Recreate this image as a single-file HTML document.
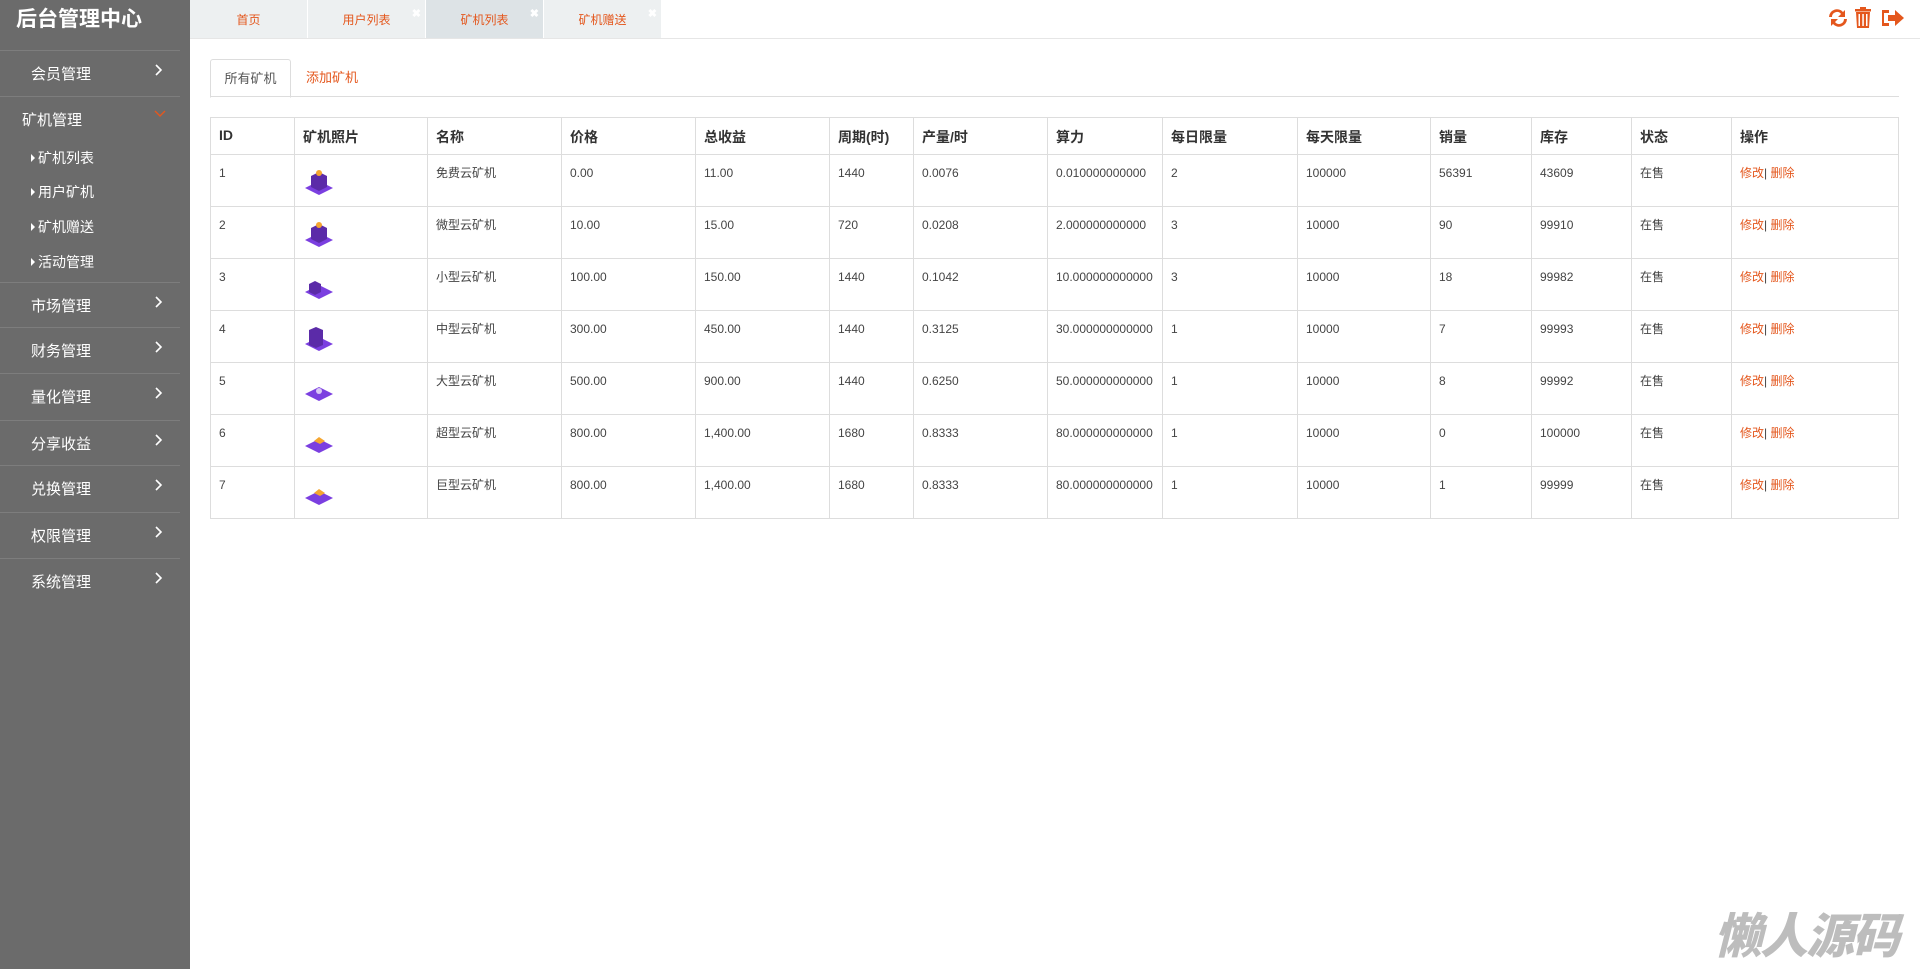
<!DOCTYPE html>
<html><head><meta charset="utf-8"><style>
*{margin:0;padding:0;box-sizing:border-box}
body{width:1920px;height:969px;overflow:hidden;background:#fff;font-family:"Liberation Sans","Noto Sans CJK SC",sans-serif;position:relative}
#side{position:absolute;left:0;top:0;width:190px;height:969px;background:#6b6b6b;color:#fff}
#side .title{height:50px;line-height:40px;font-size:21px;font-weight:bold;padding-left:16px}
.m{position:absolute;left:0;width:180px;border-top:1px solid #7d7d7d;font-size:15px;color:#fff}
.m span{position:absolute;left:31px;top:12px}
.m svg{position:absolute;left:154px;top:12px}
.s{position:absolute;left:31px;font-size:14px}
.s:before{content:"";display:inline-block;border-left:4px solid #fff;border-top:4px solid transparent;border-bottom:4px solid transparent;margin-right:3px;vertical-align:1px}
#tabs{position:absolute;left:190px;top:0;right:0;height:39px;border-bottom:1px solid #e6e6e6}
.t{position:absolute;top:0;height:38px;width:117px;background:#edf0f1;color:#e4571d;font-size:12px;line-height:40px;text-align:center}
.t b{position:absolute;right:4px;top:-6px;color:#fff;font-size:11px}
#ic{position:absolute;right:12px;top:6px}
#it{position:absolute;left:210px;top:59px;width:1689px;height:38px;border-bottom:1px solid #ddd}
#it div{position:absolute;top:0;height:38px;line-height:38px;font-size:13px}
table{position:absolute;left:210px;top:117px;width:1689px;border-collapse:collapse;border:1px solid #ddd;table-layout:fixed}
td,th{border:1px solid #ddd;text-align:left;vertical-align:top;color:#333;overflow:hidden;white-space:nowrap}
tr.h{height:37px}
tr.r{height:52px}
th{font-size:14px;padding:9px 8px 0}
td{font-size:12px;padding:11px 8px 0;color:#444;line-height:14px}
td svg{display:block;margin-top:2px}
td a{color:#e4571d}
#wm{position:absolute;left:1714px;top:897px;font-size:48px;font-weight:900;font-style:italic;color:#bdbdbd;letter-spacing:-2px;font-family:"Noto Sans CJK SC",sans-serif}
</style></head><body>
<div id="side">
<div class="title">后台管理中心</div>
<div class="m" style="top:50px;height:46px"><span>会员管理</span><svg width="10" height="14"><path d="M2 2l5 5-5 5" stroke="#fff" stroke-width="1.6" fill="none"/></svg></div>
<div class="m" style="top:96px;height:186px"><span style="left:22px">矿机管理</span><svg width="12" height="10" style="top:12px"><path d="M1 2l5 5 5-5" stroke="#e4571d" stroke-width="1.4" fill="none"/></svg></div>
<div class="s" style="top:148px">矿机列表</div>
<div class="s" style="top:182px">用户矿机</div>
<div class="s" style="top:217px">矿机赠送</div>
<div class="s" style="top:252px">活动管理</div>
<div class="m" style="top:282px;height:46px"><span>市场管理</span><svg width="10" height="14"><path d="M2 2l5 5-5 5" stroke="#fff" stroke-width="1.6" fill="none"/></svg></div>
<div class="m" style="top:327px;height:46px"><span>财务管理</span><svg width="10" height="14"><path d="M2 2l5 5-5 5" stroke="#fff" stroke-width="1.6" fill="none"/></svg></div>
<div class="m" style="top:373px;height:46px"><span>量化管理</span><svg width="10" height="14"><path d="M2 2l5 5-5 5" stroke="#fff" stroke-width="1.6" fill="none"/></svg></div>
<div class="m" style="top:420px;height:46px"><span>分享收益</span><svg width="10" height="14"><path d="M2 2l5 5-5 5" stroke="#fff" stroke-width="1.6" fill="none"/></svg></div>
<div class="m" style="top:465px;height:46px"><span>兑换管理</span><svg width="10" height="14"><path d="M2 2l5 5-5 5" stroke="#fff" stroke-width="1.6" fill="none"/></svg></div>
<div class="m" style="top:512px;height:46px"><span>权限管理</span><svg width="10" height="14"><path d="M2 2l5 5-5 5" stroke="#fff" stroke-width="1.6" fill="none"/></svg></div>
<div class="m" style="top:558px;height:46px"><span>系统管理</span><svg width="10" height="14"><path d="M2 2l5 5-5 5" stroke="#fff" stroke-width="1.6" fill="none"/></svg></div>
</div>
<div id="tabs">
<div class="t" style="left:0">首页</div>
<div class="t" style="left:118px">用户列表<b>✖</b></div>
<div class="t" style="left:236px;background:#dde3e6">矿机列表<b>✖</b></div>
<div class="t" style="left:354px">矿机赠送<b>✖</b></div>
<svg id="ic" width="82" height="24" viewBox="0 0 82 24" fill="#e4571d">
<path d="M3 11a8 8 0 0 1 14-5l2-2v7h-7l3-3a5 5 0 0 0-9 3z"/><path d="M21 13a8 8 0 0 1-14 5l-2 2v-7h7l-3 3a5 5 0 0 0 9-3z"/>
<rect x="29" y="3" width="16" height="2.5"/><rect x="34" y="1" width="6" height="3"/>
<path d="M30 6h14l-1 16H31zM32.5 8v12h1.5V8zM36.3 8v12h1.5V8zM40 8v12h1.5V8z" fill-rule="evenodd"/>
<path d="M56 4h7v3h-5v10h5v3h-7z"/><path d="M62 9h7V4l9 8-9 8v-5h-7z"/>
</svg>
</div>
<div id="it">
<div style="left:0;width:81px;border:1px solid #ddd;border-bottom:1px solid #fff;border-radius:3px 3px 0 0;text-align:center;color:#555;height:39px">所有矿机</div>
<div style="left:96px;color:#e4571d">添加矿机</div>
</div>
<table>
<colgroup><col style="width:84px"><col style="width:133px"><col style="width:134px"><col style="width:134px"><col style="width:134px"><col style="width:84px"><col style="width:134px"><col style="width:115px"><col style="width:135px"><col style="width:133px"><col style="width:101px"><col style="width:100px"><col style="width:100px"><col></colgroup>
<tr class="h"><th>ID</th><th>矿机照片</th><th>名称</th><th>价格</th><th>总收益</th><th>周期(时)</th><th>产量/时</th><th>算力</th><th>每日限量</th><th>每天限量</th><th>销量</th><th>库存</th><th>状态</th><th>操作</th></tr>
<tr class="r"><td>1</td><td><svg width="32" height="28"><path d="M2 20l14-7 14 7-14 7z" fill="#7b3fe0"/><path d="M8 8l8-4 8 4v11l-8 4-8-4z" fill="#5b2ba8"/><circle cx="16" cy="5" r="3" fill="#f5a630"/></svg></td><td>免费云矿机</td><td>0.00</td><td>11.00</td><td>1440</td><td>0.0076</td><td>0.010000000000</td><td>2</td><td>100000</td><td>56391</td><td>43609</td><td>在售</td><td><a>修改</a>| <a>删除</a></td></tr>
<tr class="r"><td>2</td><td><svg width="32" height="28"><path d="M2 20l14-7 14 7-14 7z" fill="#7b3fe0"/><path d="M8 8l8-4 8 4v11l-8 4-8-4z" fill="#5b2ba8"/><circle cx="16" cy="5" r="3" fill="#f5a630"/></svg></td><td>微型云矿机</td><td>10.00</td><td>15.00</td><td>720</td><td>0.0208</td><td>2.000000000000</td><td>3</td><td>10000</td><td>90</td><td>99910</td><td>在售</td><td><a>修改</a>| <a>删除</a></td></tr>
<tr class="r"><td>3</td><td><svg width="32" height="28"><path d="M2 20l14-7 14 7-14 7z" fill="#7b3fe0"/><path d="M6 12l6-3 6 3v8l-6 3-6-3z" fill="#5b2ba8"/></svg></td><td>小型云矿机</td><td>100.00</td><td>150.00</td><td>1440</td><td>0.1042</td><td>10.000000000000</td><td>3</td><td>10000</td><td>18</td><td>99982</td><td>在售</td><td><a>修改</a>| <a>删除</a></td></tr>
<tr class="r"><td>4</td><td><svg width="32" height="28"><path d="M2 20l14-7 14 7-14 7z" fill="#7b3fe0"/><path d="M6 6l7-3 7 3v15l-7 3-7-3z" fill="#5b2ba8"/></svg></td><td>中型云矿机</td><td>300.00</td><td>450.00</td><td>1440</td><td>0.3125</td><td>30.000000000000</td><td>1</td><td>10000</td><td>7</td><td>99993</td><td>在售</td><td><a>修改</a>| <a>删除</a></td></tr>
<tr class="r"><td>5</td><td><svg width="32" height="28"><path d="M2 18l14-7 14 7-14 7z" fill="#7b3fe0"/><circle cx="16" cy="15" r="3" fill="#d9c8f5"/></svg></td><td>大型云矿机</td><td>500.00</td><td>900.00</td><td>1440</td><td>0.6250</td><td>50.000000000000</td><td>1</td><td>10000</td><td>8</td><td>99992</td><td>在售</td><td><a>修改</a>| <a>删除</a></td></tr>
<tr class="r"><td>6</td><td><svg width="32" height="28"><path d="M2 18l14-7 14 7-14 7z" fill="#7b3fe0"/><path d="M11 13l5-4 6 4-5 3z" fill="#f5a630"/></svg></td><td>超型云矿机</td><td>800.00</td><td>1,400.00</td><td>1680</td><td>0.8333</td><td>80.000000000000</td><td>1</td><td>10000</td><td>0</td><td>100000</td><td>在售</td><td><a>修改</a>| <a>删除</a></td></tr>
<tr class="r"><td>7</td><td><svg width="32" height="28"><path d="M2 18l14-7 14 7-14 7z" fill="#7b3fe0"/><path d="M11 13l5-4 6 4-5 3z" fill="#f5a630"/></svg></td><td>巨型云矿机</td><td>800.00</td><td>1,400.00</td><td>1680</td><td>0.8333</td><td>80.000000000000</td><td>1</td><td>10000</td><td>1</td><td>99999</td><td>在售</td><td><a>修改</a>| <a>删除</a></td></tr>
</table>
<div id="wm">懒人源码</div>
</body></html>
